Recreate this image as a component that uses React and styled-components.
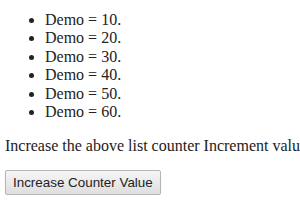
import React, { useState } from 'react';
import styled, { createGlobalStyle } from 'styled-components';

const GlobalStyle = createGlobalStyle`
  body {
    margin: 0;
    padding: 0 5px;
    background: #fff;
    font-family: "Liberation Serif", "Times New Roman", serif;
    font-size: 16px;
    color: #222;
    overflow: hidden;
  }
`;

const List = styled.ul`
  margin: 11px 0 16px;
  padding-left: 40px;
  li {
    line-height: 18.4px;
  }
`;

const Note = styled.p`
  margin: 16px 0 15px;
  white-space: nowrap;
`;

const Button = styled.button`
  font-family: "Liberation Sans", Arial, sans-serif;
  font-size: 13.4px;
  color: #222;
  padding: 2px 7px;
  height: 25px;
  border: 1px solid #b5b5b5;
  border-radius: 2px;
  background: linear-gradient(#f6f6f6, #dedede);
  box-shadow: 0 1px 1px rgba(0, 0, 0, 0.12);
`;

export default function App() {
  const [step, setStep] = useState(10);
  const items = [1, 2, 3, 4, 5, 6];
  return (
    <>
      <GlobalStyle />
      <List>
        {items.map((n) => (
          <li key={n}>Demo = {n * step}.</li>
        ))}
      </List>
      <Note>Increase the above list counter Increment value</Note>
      <Button onClick={() => setStep(step + 10)}>Increase Counter Value</Button>
    </>
  );
}
